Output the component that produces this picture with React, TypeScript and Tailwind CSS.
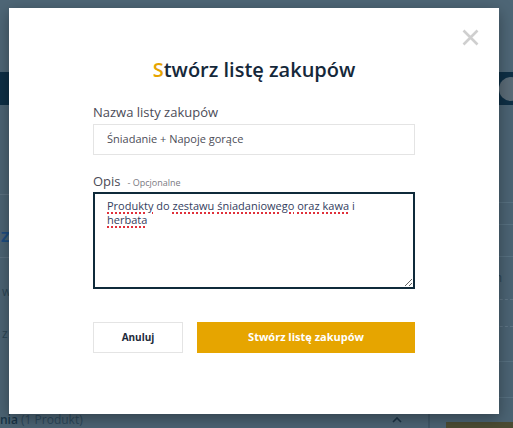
import React from "react";

const FONT = { fontFamily: '"Open Sans", "Liberation Sans", sans-serif' };

const MISSPELLED = "underline decoration-dotted decoration-[#e0303a] decoration-[1.5px] underline-offset-[2px]";

function PageBehind() {
  return (
    <div className="flex h-[428px] w-[513px] flex-col overflow-hidden bg-[#4b6373]">
      <div className="h-[72px] bg-[#4e6676]" />
      <div className="flex h-[33px] items-center justify-end bg-[#0e2f45]">
        <span className="mr-[-10px] h-[24px] w-[24px] rounded-full bg-[#5a6b77]" />
      </div>
      <div className="flex flex-1">
        {/* left column */}
        <div className="flex w-[429px] flex-col">
          <div className="h-[89px]" />
          <div className="h-[64px] border-y border-[#5b7080]">
            <span className="mt-[30px] block pl-[1px] text-[15px] font-bold text-[#1d4d80]">ZZ</span>
          </div>
          <div className="pl-[2px] pt-[25px] text-[12px] text-[#2c4656]">w</div>
          <div className="pl-[2px] pt-[24px] text-[12px] text-[#2c4656]">z</div>
          <div className="flex-1" />
          <div className="flex h-[18px] items-end justify-between border-r border-[#3f5767] pr-[26px] text-[12px] leading-[16px]">
            <span>
              <span className="font-semibold text-[#183446]">nia</span>{" "}
              <span className="text-[#2c475a]">(1 Produkt)</span>
            </span>
            <svg className="mb-[5px]" width="10" height="6" viewBox="0 0 10 6" fill="none" stroke="#1b3345" strokeWidth="1.6">
              <path d="M1 5l4-4 4 4" />
            </svg>
          </div>
        </div>
        {/* right column */}
        <div className="flex flex-1 flex-col border-l border-[#3f5767] pl-[13px] text-[12px] text-[#2c4656]">
          <div className="h-[98px] border-b border-[#577080]" />
          <div className="h-[22px] border-b border-[#577080]" />
          <div className="flex h-[32px] items-center border-b border-[#577080] font-semibold">WAR</div>
          <div className="flex h-[42px] items-center">wszystkich</div>
          <div className="flex h-[28px] items-center border-y border-dashed border-[#5f7585]">koszt</div>
          <div className="flex h-[35px] items-center border-b border-[#577080] text-[13px] font-bold text-[#14303f]">BRUTTO</div>
          <div className="flex h-[36px] items-center border-b border-[#577080]">NETTO</div>
          <div className="flex-1" />
          <div className="ml-[3px] h-[6px] bg-[#4b4c34]" />
        </div>
      </div>
    </div>
  );
}

function CreateListModal() {
  return (
    <div className="absolute left-[9px] top-[8px] flex h-[406px] w-[490px] flex-col bg-white shadow-[0_4px_14px_rgba(0,0,0,0.35)]" style={FONT}>
      <button className="absolute right-[20px] top-[21px] text-[#cfcfcf]" aria-label="Zamknij">
        <svg width="17" height="17" viewBox="0 0 17 17" stroke="currentColor" strokeWidth="2.6" fill="none">
          <path d="M1.5 1.5l14 14M15.5 1.5l-14 14" />
        </svg>
      </button>

      <h2 className="mt-[48px] text-center text-[20px] font-semibold leading-[28px] text-[#15283a]">
        <span className="text-[#e6a400]">S</span>twórz listę zakupów
      </h2>

      <div className="mx-[84px] mt-[19px] flex flex-col">
        <label className="text-[13px] leading-[18px] text-[#4b4b57]">Nazwa listy zakupów</label>
        <div className="mt-[3px] flex h-[31px] items-center border border-[#e4e4e4] px-[13px] text-[11px] text-[#4d4d57]">
          Śniadanie + Napoje gorące
        </div>

        <div className="mt-[17px] flex items-baseline gap-[7px]">
          <span className="text-[13px] leading-[18px] text-[#4b4b57]">Opis</span>
          <span className="text-[9px] text-[#7a7a82]">- Opcjonalne</span>
        </div>
        <div className="mt-[2px] h-[97px] resize overflow-auto border-2 border-[#0f2a3a] px-[12px] pt-[5px] pr-[40px] text-[11px] leading-[14px] text-[#34405e]">
          <span className={MISSPELLED}>Produkty</span> do <span className={MISSPELLED}>zestawu</span>{" "}
          <span className={MISSPELLED}>śniadaniowego</span> <span className={MISSPELLED}>oraz</span>{" "}
          <span className={MISSPELLED}>kawa</span> i <span className={MISSPELLED}>herbata</span>
        </div>

        <div className="mt-[33px] flex gap-[14px]">
          <button className="h-[31px] w-[90px] border border-[#e4e4e4] text-[10px] font-bold text-[#1d2a3a]">
            Anuluj
          </button>
          <button className="h-[31px] flex-1 bg-[#e6a500] text-[11px] font-bold text-white">
            Stwórz listę zakupów
          </button>
        </div>
      </div>
    </div>
  );
}

export default function App() {
  return (
    <div className="relative h-[428px] w-[513px] overflow-hidden" style={FONT}>
      <PageBehind />
      <CreateListModal />
    </div>
  );
}
